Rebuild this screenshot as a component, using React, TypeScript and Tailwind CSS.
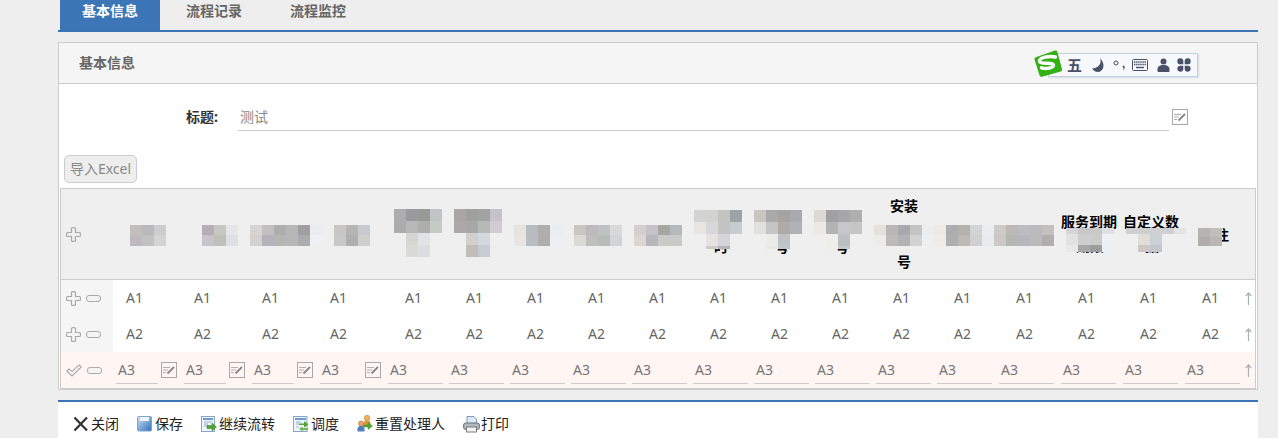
import type { ReactNode } from "react";

const GRID_COLS = "grid grid-cols-[52px_repeat(4,68px)_repeat(9,61px)_repeat(5,62px)_1fr]";

type MosaicRow = { h: string; ml?: string; colors: string[] };

function Mosaic({ rows, className = "" }: { rows: MosaicRow[]; className?: string }) {
  return (
    <div className={className}>
      {rows.map((row, i) => (
        <div key={i} className={`flex ${row.h} ${row.ml ?? ""}`}>
          {row.colors.map((c, j) => (
            <div key={j} className="w-3 shrink-0" style={{ backgroundColor: c }} />
          ))}
        </div>
      ))}
    </div>
  );
}

const flat = (a: string[], b: string[]): MosaicRow[] => [
  { h: "h-[10px]", colors: a },
  { h: "h-[11px]", colors: b },
];

const tee = (a: string[], b: string[], c: string[], d: string[], last = "h-3"): MosaicRow[] => [
  { h: "h-3", colors: a },
  { h: "h-3", colors: b },
  { h: "h-3", ml: "ml-3", colors: c },
  { h: last, ml: "ml-3", colors: d },
];

const headers: { key: string; node: ReactNode }[] = [
  { key: "c1", node: <Mosaic className="ml-[17px] mt-[3px]" rows={flat(["#c0bfbe", "#b9b9bb", "#cdcdce"], ["#bdb9bc", "#c1c2c1", "#d4d4d5"])} /> },
  { key: "c2", node: <Mosaic className="ml-[21px] mt-[3px]" rows={flat(["#b3afb4", "#c6c6c2", "#e6e6e8"], ["#c6c4c8", "#bfc0b9", "#dfe0e4"])} /> },
  { key: "c3", node: <Mosaic className="ml-px mt-[3px]" rows={flat(["#d6d5d4", "#c2c0c1", "#aeaeae", "#b6b7b6", "#a09ea0", "#ecedf0"], ["#d3d2d1", "#b5b3ba", "#b5b5b2", "#b7b7b7", "#acacae", "#eef0f3"])} /> },
  { key: "c4", node: <Mosaic className="ml-[17px] mt-[3px]" rows={flat(["#c9c7c6", "#b6b5b5", "#c5cbcf"], ["#c9c8c8", "#b1b0b0", "#cfcfcf"])} /> },
  { key: "c5", node: <Mosaic className="ml-[9px] mt-[-2px]" rows={tee(["#adadae", "#9a9a9c", "#989a98", "#c3c4c6"], ["#adacad", "#b8b8b8", "#aeaeac", "#c6cac5"], ["#d5d5d3", "#e2e3e5"], ["#dadad8", "#dcdde0"])} /> },
  { key: "c6", node: <Mosaic className="ml-2 mt-[-2px]" rows={tee(["#aaa6a5", "#a0a19e", "#a2a2a5", "#c5c3c9"], ["#aca8a9", "#a8a8a8", "#b8bab7", "#cfcdd2"], ["#d2cfcd", "#d5d8dc"], ["#c1bdbb", "#c9cbd1"])} /> },
  { key: "c7", node: <Mosaic className="ml-[7px] mt-[3px]" rows={flat(["#e7e3df", "#b8bcbf", "#b0aeac", "#ebeef1"], ["#e7e4e1", "#b9bdc0", "#b0aeac", "#ecf0f3"])} /> },
  { key: "c8", node: <Mosaic className="ml-[6px] mt-[3px]" rows={flat(["#c9c5c1", "#bdbabb", "#bfc1c2", "#d9d9da"], ["#d9d9d5", "#bebebd", "#b9bbb9", "#d3d4d6"])} /> },
  { key: "c9", node: <Mosaic className="ml-[5px] mt-[3px]" rows={flat(["#d2cfce", "#c5c3c9", "#a7a7a1", "#b5b9bc"], ["#dad6d2", "#b7b6bb", "#cacac9", "#c9cac7"])} /> },
  {
    key: "c10",
    node: (
      <Peek text="时" ml="ml-6">
        <Mosaic className="absolute left-1 top-[21px]" rows={tee(["#d3d3d4", "#d2d2d1", "#c5c5bf", "#a0a3a6"], ["#e8e6e4", "#d8d8db", "#c3c4c3", "#c9cbcc"], ["#e4e3e1", "#d5d5d7"], ["#cfccca", "#b5b5b8"], "h-[3px]")} />
      </Peek>
    ),
  },
  {
    key: "c11",
    node: (
      <Peek text="号" ml="ml-6">
        <Mosaic className="absolute left-[3px] top-[21px]" rows={tee(["#c8c6c2", "#aaa9aa", "#a6a4a3", "#a9a9ae"], ["#e1e1df", "#c5c5c5", "#aeaaa9", "#b1b1b8"], ["#ebebe8", "#bfc3c5"], ["#e8e8e5", "#c3c7c9"], "h-[3px]")} />
      </Peek>
    ),
  },
  {
    key: "c12",
    node: (
      <Peek text="号" ml="ml-[23px]">
        <Mosaic className="absolute left-[2px] top-[21px]" rows={tee(["#dbd8d6", "#a1a0a3", "#a6a6a9", "#b0afaf"], ["#ebe9e6", "#b3b3b2", "#c6c6cb", "#c5c5c5"], ["#efeeec", "#bdc0c0"], ["#ededeb", "#c6c9c9"], "h-[3px]")} />
      </Peek>
    ),
  },
  {
    key: "c13",
    node: (
      <div className="relative flex h-full w-full flex-col items-start justify-center pl-[17px] text-[14px] font-bold leading-[28px] text-black">
        <div className="w-7 text-center">安装</div>
        <div className="h-7" />
        <div className="w-7 text-center">号</div>
        <Mosaic className="absolute left-px top-[36px]" rows={flat(["#e5e1dd", "#b9b7b6", "#a9a8ad", "#c4c4c4", "#ebedef"], ["#ececea", "#bcbbb9", "#b2b1b6", "#d2d2d2", "#edeff1"])} />
      </div>
    ),
  },
  { key: "c14", node: <Mosaic className="mt-[3px]" rows={flat(["#efe9e4", "#abadb0", "#b4b2ae", "#d3d4d4", "#ebecee"], ["#efebe7", "#adafb1", "#bcbab6", "#cfd0cf", "#e9eaec"])} /> },
  { key: "c15", node: <Mosaic className="relative ml-[-2px] mt-[3px]" rows={flat(["#cfcaca", "#bcb9b5", "#bdbcc1", "#bbbbbd", "#c3c1bf"], ["#cdc8c8", "#b5b7b1", "#b6b6bc", "#bbbbbd", "#b1afac"])} /> },
  {
    key: "c16",
    node: (
      <div className="relative flex h-full w-full flex-col justify-center pl-[3px] text-[14px] font-bold leading-[28px] text-black">
        <div className="whitespace-nowrap">服务到期</div>
        <div className="mt-[-4px] pl-[15px]">期限</div>
        <Mosaic
          className="absolute left-2 top-[39px]"
          rows={[
            { h: "h-[6px]", colors: ["#d5d5d7", "#c8c8c8", "#c9c8c6", "#e0e0e2"] },
            { h: "h-[11px]", colors: ["#e2e2e2", "#cecece", "#cbcbc9", "#eef0f3"] },
            { h: "h-[7px]", colors: ["#e8e8e8", "#a8a8a8", "#9c9e9e", "#eef1f4"] },
          ]}
        />
      </div>
    ),
  },
  {
    key: "c17",
    node: (
      <div className="relative flex h-full w-full flex-col justify-center pl-[3px] text-[14px] font-bold leading-[28px] text-black">
        <div className="whitespace-nowrap">自定义数</div>
        <div className="mt-[-4px] pl-[22px]">据</div>
        <Mosaic
          className="absolute left-[6px] top-[39px]"
          rows={[
            { h: "h-[6px]", colors: ["#d0d0d2", "#d0cfcf", "#d0d0d0", "#d0d0d0", "#e3e3e3"] },
            { h: "h-[11px]", ml: "ml-3", colors: ["#e0dcd8", "#ccd0d4"] },
            { h: "h-[7px]", ml: "ml-3", colors: ["#cdc8c5", "#c3c6cb"] },
          ]}
        />
      </div>
    ),
  },
  {
    key: "c18",
    node: (
      <div className="relative flex h-full w-full items-center pl-[19px] text-[14px] font-bold text-black">
        <div className="whitespace-nowrap">备注</div>
        <Mosaic
          className="absolute left-4 top-[39px]"
          rows={[
            { h: "h-[9px]", colors: ["#b6b4b0", "#c0bebb"] },
            { h: "h-[9px]", colors: ["#b0aea9", "#bab7b2"] },
          ]}
        />
      </div>
    ),
  },
];

function Peek({ text, ml, children }: { text: string; ml: string; children: ReactNode }) {
  return (
    <div className="relative flex h-full w-full flex-col justify-center text-[14px] font-bold leading-[28px] text-black">
      <div className="h-7" />
      <div className={`mt-[-3px] ${ml}`}>{text}</div>
      {children}
    </div>
  );
}

function PlusIcon() {
  return (
    <svg width="15" height="15" viewBox="0 0 15 15" fill="none" stroke="#a9a9a9" strokeWidth="1.2">
      <path d="M5.5 1.5Q5.5.6 6.5.6H8.5Q9.5.6 9.5 1.5V5.5H13.5Q14.4 5.5 14.4 6.5V8.5Q14.4 9.5 13.5 9.5H9.5V13.5Q9.5 14.4 8.5 14.4H6.5Q5.5 14.4 5.5 13.5V9.5H1.5Q.6 9.5.6 8.5V6.5Q.6 5.5 1.5 5.5H5.5Z" />
    </svg>
  );
}

function MinusIcon() {
  return <div className="h-[7px] w-[15px] rounded-[3px] border border-[#a9a9a9] bg-[#f4f4f4]" />;
}

function CheckIcon() {
  return (
    <svg width="16" height="15" viewBox="0 0 16 15" fill="none" stroke="#a9a9a9" strokeWidth="1.1" strokeLinejoin="round">
      <path d="M.8 8 3 5.8 6 8.6 13 1.8 15.2 4 6 13Z" />
    </svg>
  );
}

function EditIcon() {
  return (
    <svg width="16" height="16" viewBox="0 0 16 16" fill="none" className="shrink-0">
      <rect x=".5" y=".5" width="15" height="15" stroke="#a8a8a8" />
      <path d="M2 5.5H9M2 8H7M2 10.5H5" stroke="#b0b0b0" />
      <path d="M6.500 11.500 13 5" stroke="#868686" strokeWidth="1.8" />
    </svg>
  );
}

function UpArrow() {
  return (
    <svg width="7" height="13" viewBox="0 0 7 13" fill="none" stroke="#a9b0b8" strokeWidth="1.2">
      <path d="M3.5 13V1M.8 4 3.5 1 6.2 4" />
    </svg>
  );
}

function SogouBar() {
  const ink = "#4a5068";
  return (
    <div className="absolute left-[1034px] top-[50px] flex h-[27px] w-[165px] items-end">
      <div className="ml-[14px] flex h-6 w-[150px] items-center border border-[#c3d0de] bg-[#f6f8fb] pl-[18px] shadow-[1px_1px_2px_#d5dbe3]">
        <span className="w-[15px] text-[15px] font-bold leading-none text-[#4a5068]">五</span>
        <svg width="14" height="14" viewBox="0 0 14 14" className="ml-[9px]">
          <path d="M9 .5C11 5 8 10 1 10.500 2.500 13 5 14 7 14 12.500 14 15 5.500 9 .5Z" fill={ink} />
        </svg>
        <svg width="14" height="14" viewBox="0 0 14 14" className="ml-[8px]" fill="none">
          <circle cx="3" cy="5" r="2" stroke={ink} strokeWidth="1" />
          <path d="M10.5 7.500c1.600 0 1.600 2.200.4 4.300l-1 .7c.6-1.200.8-1.800.8-2.600-1.500-.4-1.300-2.400-.2-2.400Z" fill={ink} />
        </svg>
        <svg width="16" height="12" viewBox="0 0 16 12" className="ml-[5px]" fill="none">
          <rect x=".5" y=".5" width="15" height="11" rx="1" stroke={ink} />
          <path d="M2 3h12M2 5.500h12" stroke={ink} strokeWidth="1.400" strokeDasharray="1.400 .7" />
          <path d="M4 8.500h8" stroke={ink} strokeWidth="1.400" />
        </svg>
        <svg width="13" height="14" viewBox="0 0 13 14" className="ml-[9px]">
          <circle cx="6.500" cy="3.500" r="3" fill={ink} />
          <path d="M.5 13c-.3-3.500.8-6 6-6s6.300 2.500 6 6c0 .6-.5 1-1 1H1.500c-.5 0-1-.4-1-1Z" fill={ink} />
        </svg>
        <svg width="14" height="14" viewBox="0 0 14 14" className="ml-[7px]" fill={ink}>
          <path d="M6.300 6.300V3a3 3 0 1 0-3 3.300ZM7.700 6.300V3a3 3 0 1 1 3 3.300ZM6.300 7.700V11a3 3 0 1 1-3-3.300ZM7.700 7.700V11a3 3 0 1 0 3-3.300Z" />
        </svg>
      </div>
      <svg width="28" height="27" viewBox="0 0 28 27" className="absolute left-0 top-0">
        <path d="M2.500 7 21 .6c1.300-.3 2 .2 2.400 1.300L28 19c.3 1.200-.2 2-1.300 2.400L8 26.800c-1.200.3-2-.2-2.400-1.300L.5 9.500C.2 8.300 1.300 7.400 2.500 7Z" fill="#33b014" />
        <path d="M21.500 7C15 5.500 5.500 7.500 5.500 11c0 3.800 14 .8 14 4.300 0 2.700-7.500 4-12 2.500" fill="none" stroke="#fff" strokeWidth="3.400" strokeLinecap="round" />
      </svg>
    </div>
  );
}

const footerIcons: Record<string, ReactNode> = {
  close: (
    <svg width="16" height="16" viewBox="0 0 16 16" fill="none" stroke="#333" strokeWidth="2.300">
      <path d="M1.500 1.500 14 14.500M14 1.500 1.500 14.500" />
    </svg>
  ),
  save: (
    <svg width="16" height="16" viewBox="0 0 16 16">
      <defs>
        <linearGradient id="fl" x1="0" y1="0" x2="1" y2="1">
          <stop offset="0" stopColor="#cfe2f6" />
          <stop offset="1" stopColor="#2f6fb8" />
        </linearGradient>
      </defs>
      <rect x=".5" y=".5" width="14" height="14.500" rx="1" fill="url(#fl)" stroke="#7ea3c9" />
      <rect x="3" y="1" width="9" height="4" fill="#f0f5fb" />
    </svg>
  ),
  next: (
    <svg width="16" height="16" viewBox="0 0 16 16">
      <rect x=".5" y=".5" width="13" height="15" fill="#eef4fb" stroke="#8aa6c7" />
      <rect x="2" y="2" width="10" height="2" fill="#6f9bcb" />
      <path d="M3 6h8M3 8h4M3 10h4" stroke="#9bb4cf" />
      <path d="M6 9.500h5V7l4.500 4-4.500 4v-2.500H6Z" fill="#53a436" stroke="#3d8227" strokeWidth=".5" />
    </svg>
  ),
  dispatch: (
    <svg width="16" height="16" viewBox="0 0 16 16">
      <rect x=".5" y=".5" width="13.500" height="15" fill="#eef4fb" stroke="#8aa6c7" />
      <rect x="2" y="2" width="11" height="2" fill="#6f9bcb" />
      <path d="M3 6h5M3 8h3M3 11h3" stroke="#9bb4cf" />
      <path d="M6 7.500h5V5l4.500 3.500L11 11.500V9H6Z" fill="#53a436" />
      <path d="M15 12H9.500v-1.500L6 13l3.500 2.500V14H15Z" fill="#6dbb4a" />
    </svg>
  ),
  reset: (
    <svg width="16" height="17" viewBox="0 0 16 17" className="mt-[-2px]">
      <circle cx="10" cy="3" r="2.800" fill="#eeb35a" stroke="#b9772a" strokeWidth=".5" />
      <path d="M6.500 11V7.500C7 6 8.500 5.500 10 5.500s3 .5 3.500 2V10Z" fill="#e0963a" />
      <circle cx="4" cy="8.500" r="2.500" fill="#e8a765" stroke="#a3602c" strokeWidth=".5" />
      <path d="M.5 16.500v-3C1 11.500 2.500 11 4 11s3 .5 3.500 2.500v3Z" fill="#4f7fc0" />
      <path d="M6.500 10h4.500V7.500l4.500 3.500-4.500 3.500V12H6.500Z" fill="#53a436" stroke="#3d8227" strokeWidth=".4" />
    </svg>
  ),
  print: (
    <svg width="17" height="17" viewBox="0 0 17 17">
      <path d="M4 .5h7l2.500 2.500V8H4Z" fill="#dce9f7" stroke="#6f8fb5" strokeWidth=".9" />
      <rect x=".6" y="7" width="15.800" height="6.500" rx="2" fill="#b4b8bd" stroke="#5f656b" strokeWidth=".9" />
      <rect x="3.500" y="11" width="10" height="5" fill="#f2f2f2" stroke="#6c7278" strokeWidth=".9" />
    </svg>
  ),
};

const footerItems = [
  { icon: "close", label: "关闭", gap: "gap-[2px]" },
  { icon: "save", label: "保存", gap: "gap-[2px]" },
  { icon: "next", label: "继续流转", gap: "gap-[2px]" },
  { icon: "dispatch", label: "调度", gap: "gap-[2px]" },
  { icon: "reset", label: "重置处理人", gap: "gap-[2px]" },
  { icon: "print", label: "打印", gap: "gap-px" },
];

const columns = Array.from({ length: 18 }, (_, i) => i);

function DataRow({ label }: { label: string }) {
  return (
    <div className={`${GRID_COLS} h-9 items-center bg-white text-[14px] text-[#666]`}>
      <div className="flex h-full items-center gap-[5px] bg-[#f5f5f5] pl-[5px]">
        <PlusIcon />
        <MinusIcon />
      </div>
      {columns.map((i) => (
        <div key={i} className={`pb-[2px] ${i < 4 ? "pl-[13px]" : "pl-5"}`}>
          {label}
        </div>
      ))}
      <div className="flex justify-center pr-[2px]">
        <UpArrow />
      </div>
    </div>
  );
}

function EditRow() {
  return (
    <div className={`${GRID_COLS} h-9 items-center bg-[#fff5f3] text-[14px] text-[#777]`}>
      <div className="flex h-full items-center gap-[5px] pl-[5px]">
        <CheckIcon />
        <MinusIcon />
      </div>
      {columns.map((i) => (
        <div key={i} className="flex items-center pl-[3px]">
          <div className={`flex h-7 items-center border-b border-[#ccc] pl-[2px] ${i < 4 ? "w-[42px]" : "w-[55px]"}`}>A3</div>
          {i < 4 && (
            <div className="ml-[3px]">
              <EditIcon />
            </div>
          )}
        </div>
      ))}
      <div className="flex justify-center pr-[2px]">
        <UpArrow />
      </div>
    </div>
  );
}

export default function App() {
  return (
    <div className="relative h-[438px] w-[1278px] overflow-hidden bg-[#eeeeee] pl-[58px] font-['Noto_Sans','Noto_Sans_CJK_SC',sans-serif]">
      <div className="w-[1200px]">
        <div className="flex h-[32px] gap-1 border-b-2 border-[#3b74b5] pl-[2px] text-[14px] font-bold text-[#666]">
          <div className="flex h-[30px] items-center bg-[#3c76b6] px-[22px] pb-[10px] text-white">基本信息</div>
          <div className="flex h-[30px] items-center px-[22px] pb-[10px]">流程记录</div>
          <div className="flex h-[30px] items-center px-[22px] pb-[10px]">流程监控</div>
        </div>

        <div className="mt-[10px] border border-[#ccc] bg-white">
          <div className="flex h-[41px] items-center border-b border-[#ccc] bg-[#f5f5f5] pb-[2px] pl-5 text-[14px] font-bold text-[#666]">基本信息</div>

          <div className="mt-5 flex h-[27px] items-center">
            <div className="w-[159px] pb-[2px] text-right text-[14px] font-bold text-[#333]">标题:</div>
            <div className="ml-5 flex h-full w-[931px] items-center border-b border-[#ccc] pb-[2px] pl-[2px] text-[14px] text-[#888]">测试</div>
            <div className="ml-[3px] mt-[-1px]">
              <EditIcon />
            </div>
          </div>

          <button className="ml-[5px] mt-6 flex h-7 w-[73px] items-center justify-center rounded-[5px] border border-[#ccc] bg-[#eeeeee] pb-[2px] text-[14px] text-[#888]">导入Excel</button>

          <div className="mx-px mt-[5px] border border-[#ccc]">
            <div className={`${GRID_COLS} h-[91px] border-b border-[#ccc] bg-[#efefef]`}>
              <div className="flex items-center pl-[5px]">
                <PlusIcon />
              </div>
              {headers.map((h) => (
                <div key={h.key} className="relative flex items-center">
                  {h.node}
                </div>
              ))}
              <div />
            </div>
            <DataRow label="A1" />
            <DataRow label="A2" />
            <EditRow />
          </div>
        </div>

        <div className="mt-[10px] flex h-[38px] items-center gap-[18px] border-t-2 border-[#3b74b5] bg-white pl-[15px] pt-2 text-[14px] text-[#222]">
          {footerItems.map((item) => (
            <div key={item.label} className={`flex items-center ${item.gap}`}>
              {footerIcons[item.icon]}
              <span className="pb-[2px]">{item.label}</span>
            </div>
          ))}
        </div>
      </div>

      <SogouBar />
    </div>
  );
}
